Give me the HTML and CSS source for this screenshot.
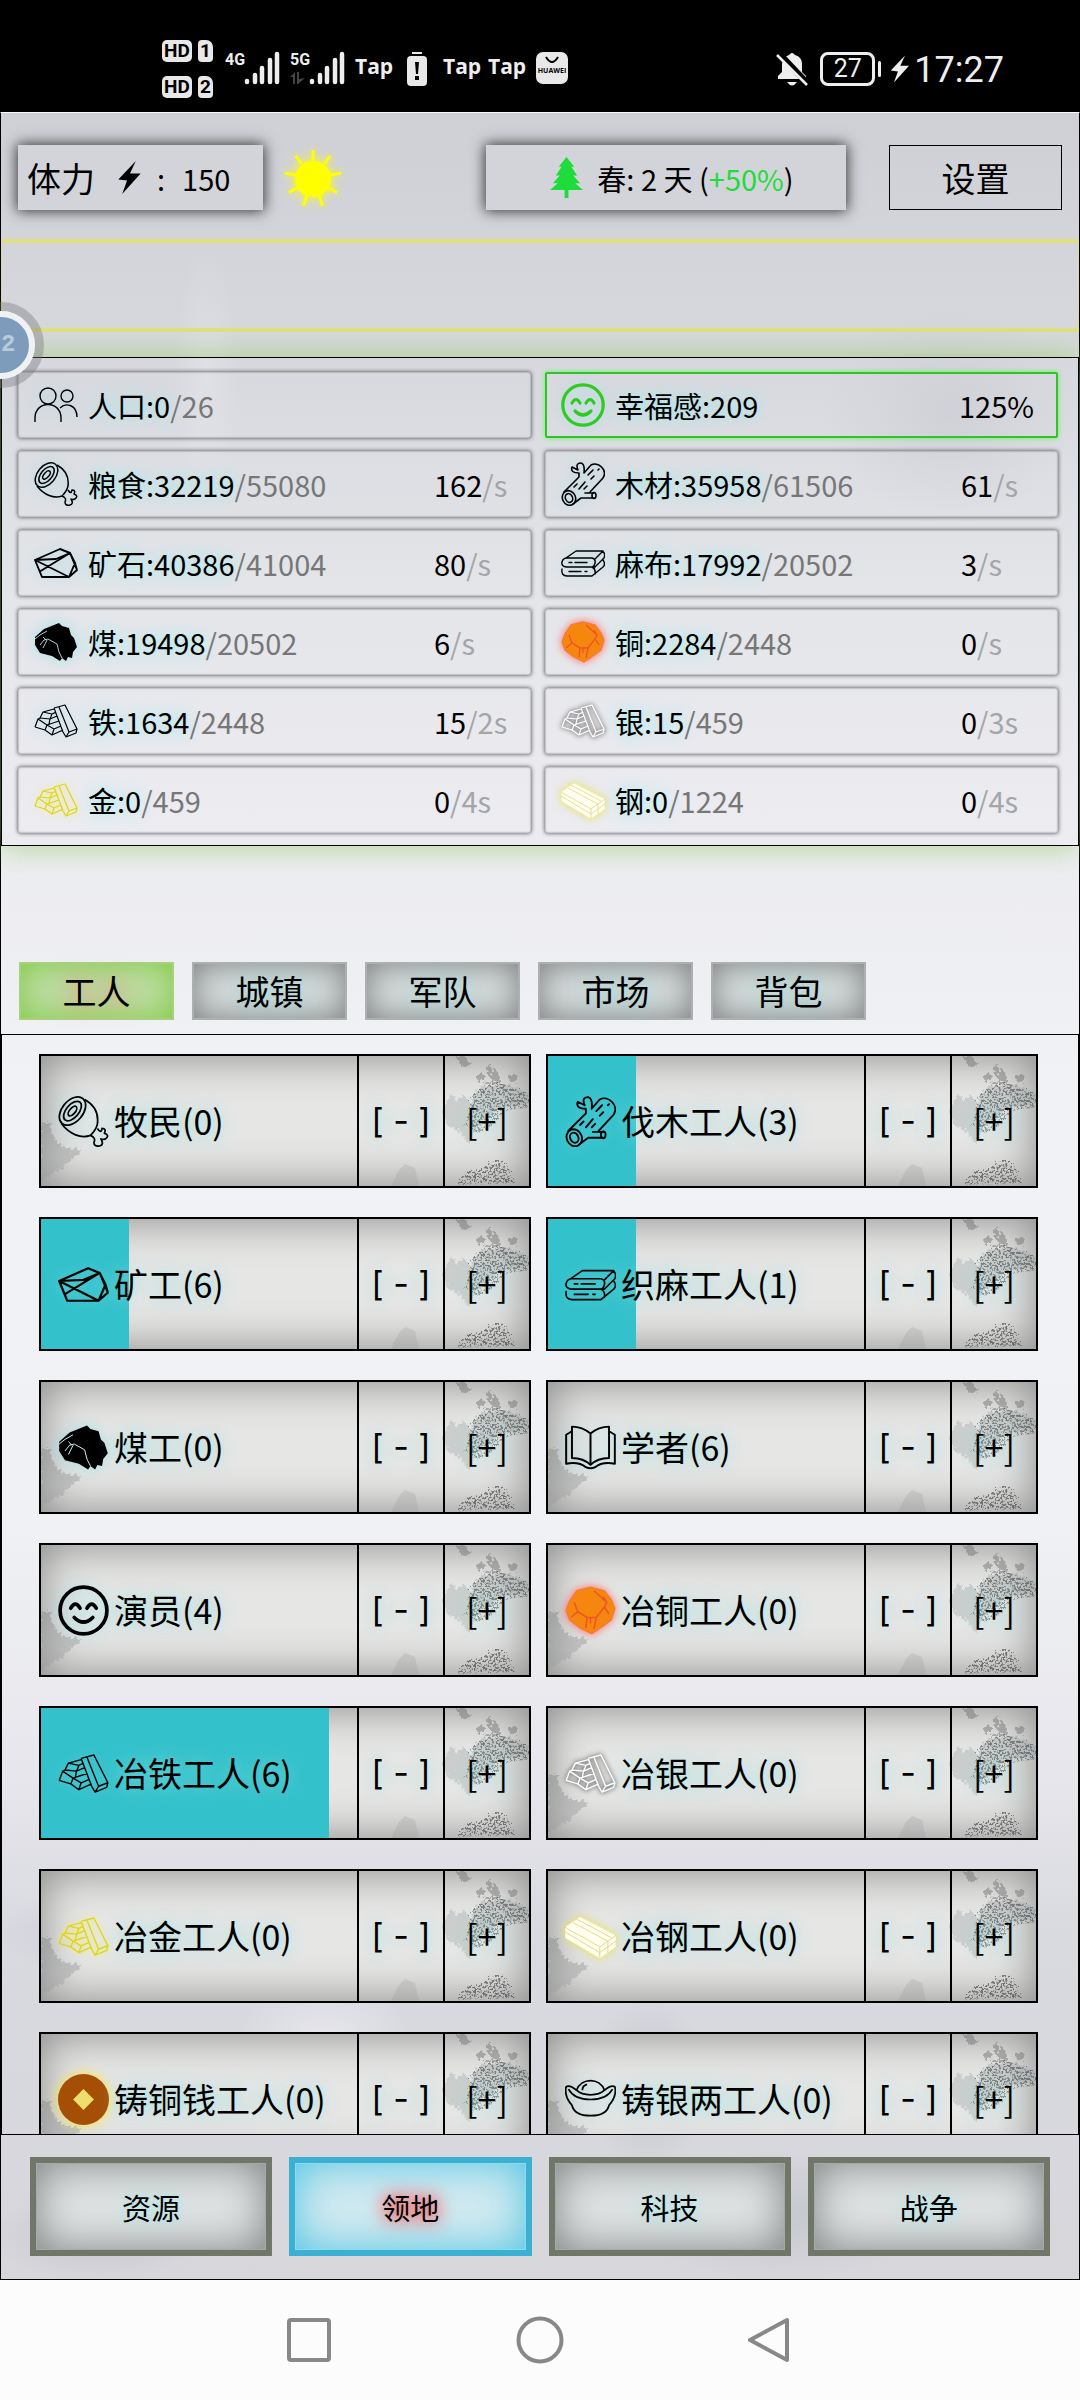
FILE: index.html
```html
<!DOCTYPE html>
<html lang="zh-CN">
<head>
<meta charset="utf-8">
<meta name="viewport" content="width=device-width, initial-scale=1">
<title>领地</title>
<link rel="stylesheet" href="styles.css">
</head>
<body>
<svg class="defs" width="0" height="0" aria-hidden="true">
  <defs>
    <filter id="ink" x="-10%" y="-10%" width="120%" height="120%">
      <feTurbulence type="fractalNoise" baseFrequency="0.45" numOctaves="3" seed="4" result="n"/>
      <feColorMatrix in="n" type="matrix" values="0 0 0 0 0  0 0 0 0 0  0 0 0 0 0  0 9 0 0 -4.400" result="m"/>
      <feDisplacementMap in="SourceGraphic" in2="n" scale="12" xChannelSelector="R" yChannelSelector="G" result="d"/>
      <feComposite in="d" in2="m" operator="in"/>
    </filter>
    <filter id="rough" x="-10%" y="-10%" width="120%" height="120%">
      <feTurbulence type="fractalNoise" baseFrequency="0.3" numOctaves="2" seed="7" result="n"/>
      <feDisplacementMap in="SourceGraphic" in2="n" scale="8" xChannelSelector="R" yChannelSelector="G"/>
    </filter>
    <linearGradient id="mist" x1="0" y1="0" x2="0" y2="1">
      <stop offset="0" stop-color="#8d8f8f" stop-opacity=".55"/>
      <stop offset="1" stop-color="#8d8f8f" stop-opacity=".25"/>
    </linearGradient>
  </defs>
  <symbol id="scene" viewBox="0 0 488 130" preserveAspectRatio="none">
    <path d="M0 68 L8 66 L14 84 L24 92 L40 94 L22 112 L0 124 Z" fill="url(#mist)" filter="url(#rough)"/>
    <path d="M350 130 L358 114 L364 108 L374 112 L378 130 Z" fill="#999" opacity=".25"/>
    <g fill="#777" opacity=".5" filter="url(#rough)">
      <path d="M414 0 h8 l8 8 -5 4 -7 -5z"/>
      <circle cx="440" cy="21" r="4"/><circle cx="449" cy="14" r="4"/><circle cx="454" cy="20" r="5"/>
      <circle cx="472" cy="22" r="4"/><path d="M443 26 h18 v2 h-18z"/>
    </g>
    <g fill="#9aa2a2" opacity=".35" filter="url(#rough)">
      <path d="M404 48 l6 -10 6 8 6 -8 8 10 8 -16 30 -4 20 10 v10 l-30 4 -22 18 -8 18 -8 -12 -14 -8 -4 -10z"/>
    </g>
    <g fill="#454b4b" opacity=".6" filter="url(#ink)">
      <path d="M432 40 q16 -18 38 -8 l18 8 v12 l-26 4 q-12 20 -26 22 l-12 -8 z"/>
    </g>
    <g fill="#3c3c3c" opacity=".6" filter="url(#ink)">
      <path d="M416 130 l8 -12 18 -4 12 -10 12 6 8 18z"/>
    </g>
  </symbol>
  <symbol id="people" viewBox="0 0 44 44"><g fill="none" stroke="currentColor" stroke-width="1.4"><circle cx="14" cy="13" r="8"/><path d="M1 39V35C1 17 27 17 27 35V39M26 25C32 19 43 22 43 34"/><circle cx="33" cy="13" r="6"/></g></symbol>
  <symbol id="smile" viewBox="0 0 44 44"><g fill="none" stroke="currentColor" stroke-width="3.2" stroke-linecap="round"><circle cx="22" cy="22" r="20.2"/><path d="M11 20q4 -7 8 0M25 20q4 -7 8 0M14 28q8 8 16 0"/></g></symbol>
  <symbol id="meat" viewBox="0 0 44 44"><g fill="none" stroke="currentColor" stroke-width="1.5" stroke-linejoin="round"><ellipse cx="12.500" cy="13" rx="14" ry="9" transform="rotate(-50 12.500 13)"/><ellipse cx="12.500" cy="13" rx="10" ry="5.500" transform="rotate(-50 12.500 13)"/><ellipse cx="12.500" cy="13" rx="5" ry="2.500" transform="rotate(-50 12.500 13)"/><path d="M23 3C32 8 35 16 34 24Q33 29 28 34C20 37 10 33 3 24M34 28Q37 33 38 28Q42 28 40 32Q45 34 41 37Q38 38 37 37Q40 42 36 43Q31 44 31 40Q33 36 28 34"/></g></symbol>
  <symbol id="log" viewBox="0 0 44 44"><g fill="none" stroke="currentColor" stroke-width="1.6" stroke-linejoin="round" stroke-linecap="round"><ellipse cx="8" cy="36" rx="6.500" ry="7.500" transform="rotate(-25 8 36)"/><ellipse cx="8" cy="36" rx="3.500" ry="4.500" transform="rotate(-25 8 36)"/><path d="M3 30L18 15M12 42L20 36H33M24 31H33M29 30L42 16C47 8 37 -1 30 3L23 11M18 15V11Q9 11 11 5L17 8Q14 1 20 1Q24 2 23 11"/><ellipse cx="33" cy="33.500" rx="2" ry="3"/><path d="M27 13l5-5M30 17l3-3M13 25l3-3M18 27l6-7M23 27l3-3M37 8l1-1"/></g></symbol>
  <symbol id="stone" viewBox="0 0 44 44"><path fill="none" stroke="currentColor" stroke-width="1.900" stroke-linejoin="round" d="M1 19L26 8L36 12L43 29L35 36H8L1 19L35 36M1 19L22 18L36 12L5 31M36 12L41 22L35 36M41 22L43 29"/></symbol>
  <symbol id="cloth" viewBox="0 0 44 44"><g fill="none" stroke="currentColor" stroke-width="1.4" stroke-linecap="round" stroke-linejoin="round"><path d="M5 17L15 10H41Q45 12 43 17L34 26H5Q0 25 1 21Q2 17 6 17H31Q35 18 34 22Q33 26 31 26M34 18L42 10M1 28Q0 35 6 35H31L42 26Q45 23 42 19M6 26H31Q35 28 34 33"/><path d="M8 21.500h3M14 21.500h12M8 30.500h12M24 30.500h2"/></g></symbol>
  <symbol id="coal" viewBox="0 0 44 44"><path fill="currentColor" d="M1 17L10 9L25 3L28 6L35 8L37 15L40 18L43 27L39 32L38 38L34 37L32 41L28 38L26 41L18 36L6 33L1 25z"/><path fill="none" stroke="#dff" stroke-width=".8" d="M1 19l5-4 7-4M6 25l4-5 4-1 9 5 2 8 3 6M13 20l-4 8M9 17l3 3"/></symbol>
  <symbol id="bars" viewBox="0 0 44 44"><path fill="none" stroke="currentColor" stroke-width="1.200" stroke-linejoin="round" d="M20 9L31 6L43 30L42 34L32 38L29 33L20 9M25 8L35 33L43 30M35 33L32 38M6 19L9 13L20 10M6 19L16 20L23 17M9 13L18 15L22 13M18 15L16 20M1 28L4 20L6 19M1 28L11 31L13 26L4 20M13 26L25 22M11 31L18 36L29 31M13 26L20 30L18 36M20 30L27 27M16 20L15 25"/></symbol>
  <symbol id="steel" viewBox="0 0 44 44"><path fill="#fffef0" stroke="#f3eda0" stroke-width=".8" stroke-linejoin="round" d="M0 14L13 5L44 21V31L30 41L0 23z"/><path fill="none" stroke="#dfd984" stroke-width=".8" d="M0 14L30 31L44 21M30 31V41M7 10L37 26V36M0 18L30 36L44 26M10 7L40 23"/></symbol>
  <symbol id="copper" viewBox="0 0 44 44"><path fill="#f5870f" stroke="#f67d30" stroke-width="1.300" d="M10 5L22 2L34 5L40 13L43 20L40 30L32 36L23 42L13 37L4 30L1 22L4 14z"/><path fill="none" stroke="#ef5326" stroke-width="1.300" d="M8 15l3 8 8 5h8l7-9 2-4-11-10M11 23l-6 5M36 15l-3 -5M34 19l4 6M19 28l-1 9M27 28l-2 10M22 28v5"/></symbol>
  <symbol id="book" viewBox="0 0 44 44"><path fill="none" stroke="currentColor" stroke-width="1.700" stroke-linejoin="round" d="M22 10Q15 4 6 4V31Q16 31 22 37Q28 31 38 31V4Q29 4 22 10V37M6 8L1 11V36Q12 34 18 39Q22 41 26 39Q32 34 43 36V11L38 8"/></symbol>
  <symbol id="coin" viewBox="0 0 44 44"><circle cx="22" cy="22" r="22" fill="#a54e06"/><path fill="#ecdf6d" d="M22 13L31 22L22 31L13 22z"/></symbol>
  <symbol id="ingot" viewBox="0 0 44 44"><path fill="none" stroke="currentColor" stroke-width="1.500" stroke-linejoin="round" d="M10 14Q4 9 1 11Q-1 19 6 27Q8 36 22 36T38 27Q45 19 43 11Q40 9 34 14M3 13Q8 22 22 22T41 13M10 14C14 3 30 3 34 14Q30 18 22 18T10 14M15 14q0-4 4-5"/></symbol>
  <symbol id="bell" viewBox="0 0 34 36"><path fill="#eee" d="M3 28V25L7 21V13Q8 6 14 4Q17 0 20 4Q27 6 27 13V21L31 25V28zM12 31h10q-5 7-10 0z"/><path stroke="#000" stroke-width="6" d="M2 0L34 34"/><path stroke="#eee" stroke-width="2.500" d="M2 4L32 34"/></symbol>
  <symbol id="bolt" viewBox="0 0 24 34"><path fill="currentColor" d="M19 0L1 19L10 20L5 34L24 13L13 13z"/></symbol>
  <symbol id="bars-signal" viewBox="0 0 36 34"><path stroke="#eee" stroke-width="4.500" stroke-linecap="round" d="M3 30v1M11 24v7M18 17v14M26 9v22M33 3v28"/></symbol>
</svg>

<div class="status">
  <div class="status-left">
    <div class="sims">
      <div class="sim"><span class="hd">HD</span><span class="slot">1</span></div>
      <div class="sim"><span class="hd">HD</span><span class="slot">2</span></div>
    </div>
    <div class="signal"><span>4G</span><svg><use href="#bars-signal"/></svg></div>
    <div class="signal"><span>5G<svg class="updown" viewBox="0 0 16 12"><path fill="#444" d="M0 5L5 0V12H3V5zM7 0V12M7 0h2v7l6-1-7 6H7z"/></svg></span><svg><use href="#bars-signal"/></svg></div>
    <span class="tap tap-first">Tap</span>
    <svg class="low" viewBox="0 0 20 34"><path fill="#e8e8e8" d="M5 0h10v2H5zM4 4h12q4 0 4 4v22q0 4-4 4H4q-4 0-4-4V8q0-4 4-4z"/><path fill="#000" d="M8 10h4l-1 12H9zM8 24h4v4H8z"/></svg>
    <span class="tap">Tap</span>
    <span class="tap">Tap</span>
    <div class="huawei"><svg viewBox="0 0 14 8"><path d="M1 1q6 10 12 0" fill="none" stroke="#000" stroke-width="2"/></svg>HUAWEI</div>
  </div>
  <div class="status-right">
    <svg class="bell"><use href="#bell"/></svg>
    <span class="battery">27</span>
    <svg class="charge"><use href="#bolt"/></svg>
    <span class="clock">17:27</span>
  </div>
</div>

<div class="app">
  <header class="top">
    <div class="box stamina"><span>体力</span><svg><use href="#bolt"/></svg><span class="amount">:</span><span class="amount">150</span></div>
    <svg class="sun" viewBox="0 0 60 60"><circle cx="30" cy="31" r="17"/><path d="M30 12V1M42 15l6-8M47 27l12-2M46 40l9 5M36 47l4 12M24 47l-4 12M14 40l-9 5M13 27l-12-2M18 15l-6-8"/></svg>
    <div class="box season"><svg viewBox="0 0 34 42"><path d="M17 0L25 10H22L28 19H24L31 27H26L34 34H19V42H15V34H0L8 27H3L10 19H6L12 10H9z"/></svg><span>春: 2 天 (<b>+50%</b>)</span></div>
    <button class="settings" type="button">设置</button>
  </header>
  <div class="ticker"></div>

  <section class="resources">
    <div class="res"><svg><use href="#people"/></svg><p>人口:0<i>/26</i></p></div>
    <div class="res happy"><svg><use href="#smile"/></svg><p>幸福感:209</p><span>125%</span></div>
    <div class="res"><svg><use href="#meat"/></svg><p>粮食:32219<i>/55080</i></p><span>162<i>/s</i></span></div>
    <div class="res"><svg><use href="#log"/></svg><p>木材:35958<i>/61506</i></p><span>61<i>/s</i></span></div>
    <div class="res"><svg><use href="#stone"/></svg><p>矿石:40386<i>/41004</i></p><span>80<i>/s</i></span></div>
    <div class="res"><svg><use href="#cloth"/></svg><p>麻布:17992<i>/20502</i></p><span>3<i>/s</i></span></div>
    <div class="res"><svg><use href="#coal"/></svg><p>煤:19498<i>/20502</i></p><span>6<i>/s</i></span></div>
    <div class="res"><svg class="copper"><use href="#copper"/></svg><p>铜:2284<i>/2448</i></p><span>0<i>/s</i></span></div>
    <div class="res"><svg><use href="#bars"/></svg><p>铁:1634<i>/2448</i></p><span>15<i>/2s</i></span></div>
    <div class="res"><svg class="silver"><use href="#bars"/></svg><p>银:15<i>/459</i></p><span>0<i>/3s</i></span></div>
    <div class="res"><svg class="gold"><use href="#bars"/></svg><p>金:0<i>/459</i></p><span>0<i>/4s</i></span></div>
    <div class="res"><svg class="steel"><use href="#steel"/></svg><p>钢:0<i>/1224</i></p><span>0<i>/4s</i></span></div>
  </section>

  <nav class="tabs">
    <button class="active" type="button">工人</button>
    <button type="button">城镇</button>
    <button type="button">军队</button>
    <button type="button">市场</button>
    <button type="button">背包</button>
  </nav>

  <section class="workers">
    <div class="card"><svg class="scene"><use href="#scene"/></svg><button class="job" type="button"><svg><use href="#meat"/></svg><span>牧民(0)</span></button><button class="minus" type="button">[ - ]</button><button type="button">[+]</button></div>
    <div class="card"><svg class="scene"><use href="#scene"/></svg><button class="job" type="button"><i class="fill" style="width:28%"></i><svg><use href="#log"/></svg><span>伐木工人(3)</span></button><button class="minus" type="button">[ - ]</button><button type="button">[+]</button></div>
    <div class="card"><svg class="scene"><use href="#scene"/></svg><button class="job" type="button"><i class="fill" style="width:28%"></i><svg><use href="#stone"/></svg><span>矿工(6)</span></button><button class="minus" type="button">[ - ]</button><button type="button">[+]</button></div>
    <div class="card"><svg class="scene"><use href="#scene"/></svg><button class="job" type="button"><i class="fill" style="width:28%"></i><svg><use href="#cloth"/></svg><span>织麻工人(1)</span></button><button class="minus" type="button">[ - ]</button><button type="button">[+]</button></div>
    <div class="card"><svg class="scene"><use href="#scene"/></svg><button class="job" type="button"><svg><use href="#coal"/></svg><span>煤工(0)</span></button><button class="minus" type="button">[ - ]</button><button type="button">[+]</button></div>
    <div class="card"><svg class="scene"><use href="#scene"/></svg><button class="job" type="button"><svg><use href="#book"/></svg><span>学者(6)</span></button><button class="minus" type="button">[ - ]</button><button type="button">[+]</button></div>
    <div class="card"><svg class="scene"><use href="#scene"/></svg><button class="job" type="button"><svg><use href="#smile"/></svg><span>演员(4)</span></button><button class="minus" type="button">[ - ]</button><button type="button">[+]</button></div>
    <div class="card"><svg class="scene"><use href="#scene"/></svg><button class="job" type="button"><svg class="copper"><use href="#copper"/></svg><span>冶铜工人(0)</span></button><button class="minus" type="button">[ - ]</button><button type="button">[+]</button></div>
    <div class="card"><svg class="scene"><use href="#scene"/></svg><button class="job" type="button"><i class="fill" style="width:91%"></i><svg><use href="#bars"/></svg><span>冶铁工人(6)</span></button><button class="minus" type="button">[ - ]</button><button type="button">[+]</button></div>
    <div class="card"><svg class="scene"><use href="#scene"/></svg><button class="job" type="button"><svg class="silver"><use href="#bars"/></svg><span>冶银工人(0)</span></button><button class="minus" type="button">[ - ]</button><button type="button">[+]</button></div>
    <div class="card"><svg class="scene"><use href="#scene"/></svg><button class="job" type="button"><svg class="gold"><use href="#bars"/></svg><span>冶金工人(0)</span></button><button class="minus" type="button">[ - ]</button><button type="button">[+]</button></div>
    <div class="card"><svg class="scene"><use href="#scene"/></svg><button class="job" type="button"><svg class="steel"><use href="#steel"/></svg><span>冶钢工人(0)</span></button><button class="minus" type="button">[ - ]</button><button type="button">[+]</button></div>
    <div class="card"><svg class="scene"><use href="#scene"/></svg><button class="job" type="button"><svg class="coin"><use href="#coin"/></svg><span>铸铜钱工人(0)</span></button><button class="minus" type="button">[ - ]</button><button type="button">[+]</button></div>
    <div class="card"><svg class="scene"><use href="#scene"/></svg><button class="job" type="button"><svg><use href="#ingot"/></svg><span>铸银两工人(0)</span></button><button class="minus" type="button">[ - ]</button><button type="button">[+]</button></div>
  </section>

  <nav class="pages">
    <button type="button">资源</button>
    <button class="active" type="button">领地</button>
    <button type="button">科技</button>
    <button type="button">战争</button>
  </nav>
</div>

<nav class="system">
  <button type="button" aria-label="最近任务"><svg viewBox="0 0 48 48"><rect x="4" y="4" width="40" height="40" rx="2"/></svg></button>
  <button type="button" aria-label="主屏幕"><svg viewBox="0 0 48 48"><circle cx="24" cy="24" r="21.500"/></svg></button>
  <button type="button" aria-label="返回"><svg viewBox="0 0 48 48"><path d="M40 4V44L3 24z"/></svg></button>
</nav>
<div class="ball"><span>22</span></div>
</body>
</html>
```
FILE: styles.css
```css
* {
  box-sizing: border-box;
}

body {
  margin: 0;
  height: 100vh;
  display: flex;
  flex-direction: column;
  overflow: hidden;
  position: relative;
  background: #fcfcfc;
  color: #000;
  font-family: "Noto Sans CJK SC", sans-serif;
  font-size: 29px;
  line-height: 40px;
}

button {
  margin: 0;
  padding: 0;
  border: 0;
  background: none;
  color: inherit;
  font: inherit;
  font-size: 34px;
}

i,
b {
  font-style: normal;
  font-weight: 400;
}

.defs {
  position: absolute;
}

/* phone status bar */
.status {
  flex: none;
  height: 112px;
  display: flex;
  justify-content: space-between;
  padding: 40px 76px 0 162px;
  background: #000;
  color: #eee;
}

.status-left,
.status-right {
  display: flex;
  align-items: flex-start;
}

.sims {
  display: grid;
  gap: 14px;
  margin-right: 12px;
}

.sim {
  display: flex;
  gap: 6px;
  color: #000;
  font: bold 19px/22px Roboto, sans-serif;
  text-align: center;
}

.hd,
.slot {
  width: 30px;
  height: 22px;
  border-radius: 5px;
  background: #e8e8e8;
}

.slot {
  width: 15px;
  border-radius: 4px 7px 4px 4px;
}

.signal {
  display: flex;
  margin: 11px 10px 0 0;
  font: bold 16px/17px Roboto, sans-serif;
}

.signal > span {
  width: 19px;
}

.signal > svg {
  width: 36px;
  height: 34px;
}

.updown {
  display: block;
  width: 16px;
  height: 12px;
  margin-top: 4px;
}

.tap {
  width: 36px;
  margin: 11px 9px 0 0;
  font: bold 21px/30px "Open Sans", sans-serif;
}

.tap-first {
  margin-right: 16px;
}

.low {
  width: 20px;
  height: 34px;
  margin: 12px 16px 0 0;
}

.huawei {
  width: 32px;
  height: 32px;
  margin: 12px 0 0 3px;
  border-radius: 7px;
  background: #e8e8e8;
  color: #000;
  font: bold 7px/9px "Open Sans", sans-serif;
  text-align: center;
}

.huawei svg {
  display: block;
  width: 14px;
  height: 8px;
  margin: 4px auto 2px;
}

.bell {
  width: 34px;
  height: 36px;
  margin: 11px 11px 0 0;
}

.battery {
  position: relative;
  width: 55px;
  height: 34px;
  margin: 12px 15px 0 0;
  border: 3px solid #eee;
  border-radius: 8px;
  font: 25px/28px Roboto, sans-serif;
  text-align: center;
}

.battery::after {
  content: "";
  position: absolute;
  right: -9px;
  top: 6px;
  width: 3px;
  height: 16px;
  border-radius: 2px;
  background: #eee;
}

.charge {
  width: 19px;
  height: 28px;
  margin: 15px 5px 0 0;
}

.clock {
  margin-top: 10px;
  font: 36px/40px Roboto, sans-serif;
}

/* game window */
.app {
  flex: 1;
  min-height: 0;
  display: flex;
  flex-direction: column;
  border: 1px solid #000;
  border-top-color: #f8f8f8;
  background:
    radial-gradient(ellipse 12% 5% at 88% 14%, rgba(190, 190, 200, .35), transparent),
    radial-gradient(ellipse 3% 6% at 19% 12%, rgba(240, 240, 245, .3), transparent),
    radial-gradient(ellipse 10% 3% at 70% 84%, rgba(190, 192, 202, .5), transparent),
    radial-gradient(ellipse 8% 2% at 8% 84%, rgba(190, 192, 202, .4), transparent),
    radial-gradient(ellipse 6% 4% at 60% 91%, rgba(165, 168, 178, .35), transparent),
    radial-gradient(ellipse 8% 3% at 30% 89%, rgba(240, 240, 245, .6), transparent),
    radial-gradient(ellipse 14% 3% at 72% 97%, rgba(175, 176, 186, .4), transparent),
    radial-gradient(ellipse 10% 2% at 9% 98%, rgba(175, 176, 186, .4), transparent),
    linear-gradient(#cfd0d5, #d7d8dd 11%, #e4e5e9 22%, #ebebf0 32%, #f1f2f5 45%, #f0f1f4 65%, #e6e6ec 77%, #d9dae0 84%, #d6d6db);
}

.top {
  display: flex;
  align-items: center;
  padding: 32px 17px 29px;
}

.box,
.settings {
  height: 65px;
  display: flex;
  align-items: center;
  background: #d3d4d9;
}

.box {
  box-shadow: 0 0 13px 1px #333;
}

.stamina {
  width: 245px;
  padding-left: 9px;
  font-size: 34px;
}

.stamina svg {
  width: 24px;
  height: 33px;
  margin: 0 16px 0 22px;
}

.amount {
  margin-right: 17px;
  font-size: 29px;
}

.sun {
  width: 58px;
  height: 60px;
  margin-left: 21px;
  fill: #ff0;
  stroke: #ff0;
  stroke-width: 3;
  filter: drop-shadow(0 0 4px #ff0);
}

.season {
  width: 360px;
  justify-content: center;
  gap: 14px;
  margin: 0 43px 0 auto;
  padding-left: 12px;
}

.season svg {
  width: 33px;
  height: 41px;
  fill: #1fdc3d;
}

.season b {
  color: #1fdc3d;
}

.settings {
  width: 173px;
  justify-content: center;
  border: 1px solid #000;
  background: none;
}

.ticker {
  height: 93px;
  margin-bottom: 25px;
  border: solid #e0e07e;
  border-width: 4px 1px;
}

.resources {
  display: grid;
  grid-template-columns: 1fr 1fr;
  gap: 13px 14px;
  padding: 14px 20px 12px 16px;
  border: 1px solid #000;
  box-shadow: 0 0 28px rgba(150, 205, 105, .75);
}

.res {
  min-width: 0;
  height: 66px;
  display: flex;
  align-items: center;
  padding-left: 16px;
  border-radius: 2px;
  box-shadow: 0 0 4px #444, inset 0 0 2px #666;
}

.res svg {
  flex: none;
  width: 44px;
  height: 44px;
  margin-right: 10px;
  filter: drop-shadow(0 0 7px rgba(120, 225, 230, .6));
}

.res p {
  flex: 1;
  margin: 0;
  text-shadow: 0 0 16px #8ee;
}

.res p i {
  color: #777;
  text-shadow: none;
}

.res span {
  width: 97px;
}

.res span i {
  color: #a5a5a8;
}

.happy {
  border: 2px solid #35c12c;
  padding-left: 14px;
  box-shadow: 0 0 5px #5f5;
}

.happy svg {
  color: #2fca22;
}

.res .copper,
.job .copper {
  filter: drop-shadow(0 0 4px #f66);
}

.res .silver,
.job .silver {
  color: #fff;
  filter: drop-shadow(0 0 2px #777) drop-shadow(0 0 2px #999);
}

.res .gold,
.job .gold {
  color: #ddd51e;
  filter: drop-shadow(0 0 3px #f4ee6a);
}

.res .steel,
.job .steel {
  filter: drop-shadow(0 0 4px #e6df62);
}

.job .coin {
  filter: drop-shadow(0 0 6px #f8e640);
}

.tabs {
  display: flex;
  gap: 18px;
  padding: 116px 18px 14px;
}

.tabs button {
  width: 155px;
  height: 58px;
  border: 2px solid #aeb0b0;
  background: #d6dcdc;
  box-shadow: inset 0 0 32px #7b7d7d;
  text-shadow: 0 0 20px #9dd;
}

.tabs .active {
  border-color: #a8d080;
  background: #bfdca6;
  box-shadow: inset 0 0 32px #7fcc42;
  text-shadow: 0 0 20px #f77;
}

/* the list scrolls under the page buttons */
.workers {
  flex: 1;
  min-height: 0;
  overflow-y: auto;
  scrollbar-width: none;
  display: grid;
  grid-template-columns: 1fr 1fr;
  grid-auto-rows: 134px;
  gap: 29px 15px;
  padding: 19px 40px 20px 37px;
  border: 1px solid #000;
}

.card {
  position: relative;
  min-width: 0;
  display: flex;
  border: 2px solid #000;
  background: #e6e6e5;
  box-shadow: inset 0 0 44px #858785;
}

.scene {
  position: absolute;
  inset: 0;
  width: 100%;
  height: 100%;
}

.card button {
  position: relative;
  width: 86px;
  border-left: 2px solid #000;
  text-shadow: 0 0 18px #8dd;
}

.card .minus {
  font-family: Inter, sans-serif;
}

.card .job {
  flex: 1;
  display: flex;
  align-items: center;
  padding-left: 17px;
  border: 0;
}

.job svg,
.job span {
  position: relative;
}

.job svg {
  width: 51px;
  height: 51px;
  margin-right: 5px;
  filter: drop-shadow(0 0 7px rgba(120, 225, 230, .6));
}

.fill {
  position: absolute;
  left: 0;
  top: 0;
  height: 100%;
  background: #33c1cb;
}

.pages {
  display: grid;
  grid-template-columns: repeat(4, 1fr);
  gap: 17px;
  padding: 22px 29px 23px;
}

.pages button {
  height: 99px;
  border: 6px solid #717768;
  background: #dfe3e3;
  box-shadow: inset 0 0 0 1px #a5aaa5, inset 0 0 44px #7d7f7f;
  font-size: 29px;
  text-shadow: 0 0 14px #9ee;
}

.pages .active {
  border-color: #3cb0d3;
  background: #d2eaf0;
  box-shadow: inset 0 0 0 1px #8cdcf0, inset 0 0 44px #4cc4e4;
  text-shadow: 0 0 16px #f44, 0 0 20px #f66;
}

/* phone navigation */
.system {
  flex: none;
  height: 120px;
  display: flex;
  justify-content: center;
  align-items: center;
  gap: 183px;
}

.system button {
  width: 48px;
  height: 48px;
}

.system svg {
  display: block;
  fill: none;
  stroke: #888;
  stroke-width: 4;
  stroke-linejoin: round;
}

/* floating assistant, half off the left edge */
.ball {
  position: absolute;
  left: -42px;
  top: 302px;
  width: 86px;
  height: 86px;
  display: flex;
  align-items: center;
  justify-content: center;
  border: 9px solid rgba(120, 120, 125, .4);
  border-radius: 50%;
}

.ball span {
  flex: none;
  width: 68px;
  height: 68px;
  border: 6px solid #eff1f4;
  border-radius: 50%;
  background: #7d9cbb;
  color: #b9cbdd;
  font: bold 24px/56px "Liberation Mono", monospace;
  text-align: center;
}
```
